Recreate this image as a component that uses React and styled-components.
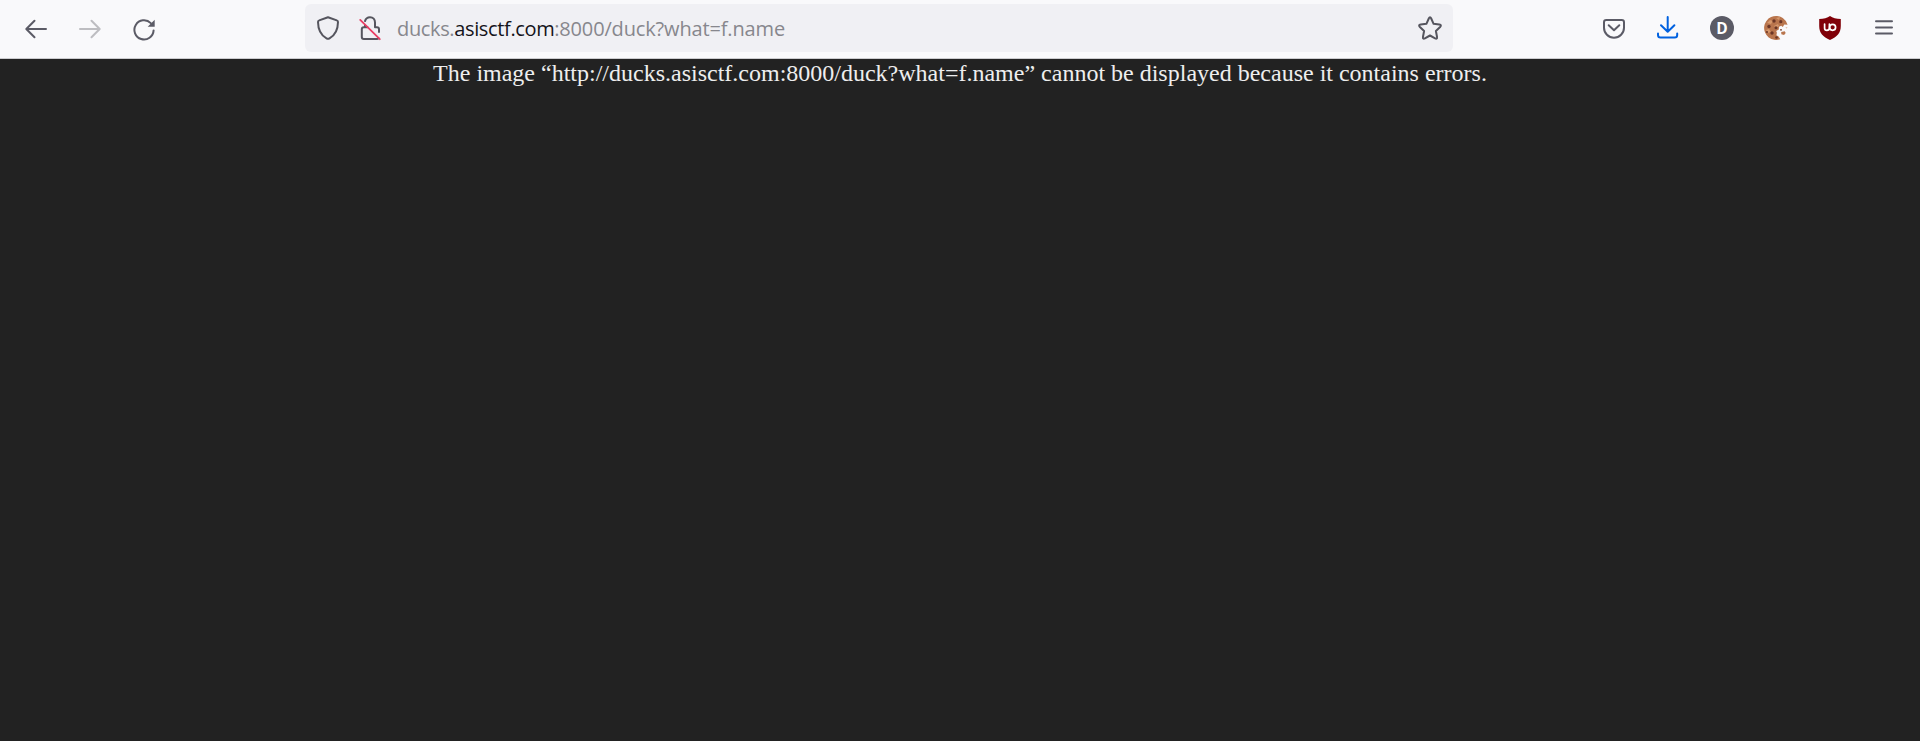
import React from "react";
import styled, { createGlobalStyle } from "styled-components";

const GlobalStyle = createGlobalStyle`
  * { box-sizing: border-box; }
  body { margin: 0; background: #222222; }
`;

const Browser = styled.div`
  display: flex;
  flex-direction: column;
  width: 100%;
  height: 100vh;
  overflow: hidden;
`;

const Toolbar = styled.header`
  display: flex;
  flex: none;
  align-items: flex-start;
  justify-content: space-between;
  height: 59px;
  padding: 4px 9px 0;
  background: #f9f9fb;
  border-bottom: 1px solid #cccccf;
`;

const ButtonGroup = styled.div`
  display: flex;
  width: ${(p) => p.$width}px;
  justify-content: ${(p) => p.$align || "flex-start"};
`;

const ToolButton = styled.button`
  display: flex;
  align-items: center;
  justify-content: center;
  width: 54px;
  height: 48px;
  padding: 0;
  border: 0;
  background: transparent;
  color: ${(p) => p.$color || "#5b5b66"};
`;

const Icon = styled.svg`
  display: block;
  flex: none;
  width: 24px;
  height: 24px;
  overflow: visible;
  fill: none;
  stroke: currentColor;
  stroke-width: 2;
  stroke-linecap: round;
  stroke-linejoin: round;
`;

const AddressBar = styled.div`
  display: flex;
  align-items: center;
  width: 1148px;
  height: 48px;
  padding: 0 11px;
  border-radius: 6px;
  background: #f0f0f4;
  color: #55555e;
`;

const IdentityIcons = styled.div`
  display: flex;
  gap: 18px;
  margin-right: 15px;
`;

const Url = styled.div`
  display: flex;
  flex: 1;
  height: 28px;
  padding-top: 1px;
  line-height: 28px;
  font-family: "Open Sans", "Noto Sans", sans-serif;
  font-size: 20px;
  white-space: nowrap;
`;

const UrlPart = styled.span`
  width: ${(p) => p.$width}px;
  color: ${(p) => (p.$strong ? "#15141a" : "#87878d")};
  letter-spacing: ${(p) => p.$spacing}px;
`;

const Avatar = styled.span`
  width: 24px;
  height: 24px;
  border-radius: 50%;
  background: #5b5b66;
  color: #ffffff;
  font: 700 15.5px/24px "Open Sans", sans-serif;
  text-align: center;
`;

const Viewport = styled.main`
  flex: 1;
  background: #222222;
  color: #eeeeee;
  font: 24px/28px "Liberation Serif", "Times New Roman", serif;
  text-align: center;
`;

const Message = styled.p`
  margin: 0;
  white-space: nowrap;
`;

const BackIcon = () => (
  <Icon viewBox="0 0 24 24"><path d="M22 13H2.5M10.5 4.8L2.3 13l8.2 8.2" /></Icon>
);

const ForwardIcon = () => (
  <Icon viewBox="0 0 24 24"><path d="M2 13h19.5M13.5 4.8l8.2 8.2-8.2 8.2" /></Icon>
);

const ReloadIcon = () => (
  <Icon viewBox="0 0 24 24">
    <path d="M21.6 14.4A9.6 9.6 0 1 1 18.8 7.1" />
    <path d="M22.7 3.8v7h-7z" fill="currentColor" stroke="none" />
  </Icon>
);

const ShieldIcon = () => (
  <Icon viewBox="0 0 24 24">
    <path d="M12 1.2L20.8 4.4Q22 4.8 22 6C21.9 13.5 19.2 19.2 13.5 22.4Q12 23.2 10.5 22.4C4.8 19.2 2.1 13.5 2 6Q2 4.8 3.2 4.4z" />
  </Icon>
);

const InsecureLockIcon = () => (
  <Icon viewBox="0 0 24 24">
    <path d="M7 5.1C7.7 2.7 9.4 1.2 12 1.2c3.1 0 5 2.3 5 5.3v4.8h2q2 0 2 2v2.8M7 9.5v1.8H5.8q-2 0-2 2v7.7q0 2 2 2H19q1 0 1.6-.8M7 11.3h2.5" />
    <path d="M2.2 3.9L21.8 23.2" stroke="#e83d62" strokeWidth="1.8" />
  </Icon>
);

const StarIcon = () => (
  <Icon viewBox="0 0 24 24">
    <path d="M10.8 2.5Q12 .1 13.2 2.5L15.6 7.8l5.7.7q2.7.5.8 2.5l-4.2 4 1.1 5.8q.4 2.7-1.9 1.5L12 19.5l-5.1 2.8q-2.3 1.2-1.9-1.5L6.1 15l-4.2-4q-1.9-2 .8-2.5l5.7-.7z" />
  </Icon>
);

const PocketIcon = () => (
  <Icon viewBox="0 0 24 24">
    <path d="M4.3 4h15.4q2.3 0 2.3 2.3v5.4a10 10 0 0 1-20 0V6.3Q2 4 4.3 4z" />
    <path d="M6.7 9.2l5.3 5 5.3-5" />
  </Icon>
);

const DownloadIcon = () => (
  <Icon viewBox="0 0 24 24">
    <path d="M11.7 1v14.6M5 9.3l6.7 6.5 6.7-6.5M2 17.5V19q0 2.5 2.5 2.5h14.2q2.5 0 2.5-2.5v-1.5" />
  </Icon>
);

const CookieShape = styled(Icon)`
  stroke: none;
`;

const CookieIcon = () => (
  <CookieShape viewBox="0 0 24 24">
    <path d="M18.8 2A12 12 0 1 0 16.3 23.2l-1.7-2.7-2.2-1.2.5-2.6-.7-1.8 2.6-1.3.2-2.8 2.2-1 1.6 1.2 1.5-2.4 3.3.2A12 12 0 0 0 18.8 2z" fill="#b9754d" />
    <path d="M3 7l3-3 3 1-2 3zM12 2l4-1-1 3zM10 10l4-2 1 2-3 2zM2 14l3-1 2 3-3 1z" fill="#d6986c" />
    <g fill="#6b3626">
      <circle cx="10" cy="5" r="1.7" /><circle cx="16.8" cy="5.7" r="1.6" />
      <circle cx="5" cy="10.5" r="1.7" /><circle cx="12" cy="11.8" r="1.5" />
      <circle cx="8" cy="17" r="1.7" /><circle cx="3" cy="16" r="1" />
      <circle cx="12.5" cy="21.5" r="1.3" /><circle cx="17" cy="13.8" r=".9" />
    </g>
    <path d="M17.2 16l3.5-.8 1 1.8-1.6 2-2.8-.8z" fill="#b9754d" />
    <path d="M21.6 11l2 .7-1.4.8z" fill="#dfb092" />
  </CookieShape>
);

const BlockerIcon = () => (
  <Icon viewBox="0 0 24 24">
    <path d="M12 0Q16 3 22.8 3V10C22.8 17 19 21 12 24 5 21 1.2 17 1.2 10V3Q8 3 12 0z" fill="#800008" stroke="none" />
    <path d="M6.6 8v4.2q0 2.2 2.3 2.2t2.5-2.2V8" stroke="#fff" strokeWidth="1.7" />
    <circle cx="14.6" cy="11.3" r="3" stroke="#fff" strokeWidth="1.7" />
  </Icon>
);

const MenuIcon = () => (
  <Icon viewBox="0 0 24 24"><path d="M4 5.3h16M4 11.4h16M4 17.5h16" /></Icon>
);

export default function App() {
  return (
    <Browser>
      <GlobalStyle />
      <Toolbar>
        <ButtonGroup $width={296}>
          <ToolButton aria-label="Back"><BackIcon /></ToolButton>
          <ToolButton aria-label="Forward" $color="#bdbdc1"><ForwardIcon /></ToolButton>
          <ToolButton aria-label="Reload"><ReloadIcon /></ToolButton>
        </ButtonGroup>
        <AddressBar>
          <IdentityIcons>
            <ShieldIcon />
            <InsecureLockIcon />
          </IdentityIcons>
          <Url>
            <UrlPart $width={57.2} $spacing={-0.35}>ducks.</UrlPart>
            <UrlPart $width={100} $spacing={-0.35} $strong>asisctf.com</UrlPart>
            <UrlPart $width={230} $spacing={-0.15}>:8000/duck?what=f.name</UrlPart>
          </Url>
          <StarIcon />
        </AddressBar>
        <ButtonGroup $width={458} $align="flex-end">
          <ToolButton aria-label="Save to Pocket"><PocketIcon /></ToolButton>
          <ToolButton aria-label="Downloads" $color="#0061e0"><DownloadIcon /></ToolButton>
          <ToolButton aria-label="Account"><Avatar>D</Avatar></ToolButton>
          <ToolButton aria-label="Cookies"><CookieIcon /></ToolButton>
          <ToolButton aria-label="Content blocker"><BlockerIcon /></ToolButton>
          <ToolButton aria-label="Menu"><MenuIcon /></ToolButton>
        </ButtonGroup>
      </Toolbar>
      <Viewport>
        <Message>The image “http://ducks.asisctf.com:8000/duck?what=f.name” cannot be displayed because it contains errors.</Message>
      </Viewport>
    </Browser>
  );
}
